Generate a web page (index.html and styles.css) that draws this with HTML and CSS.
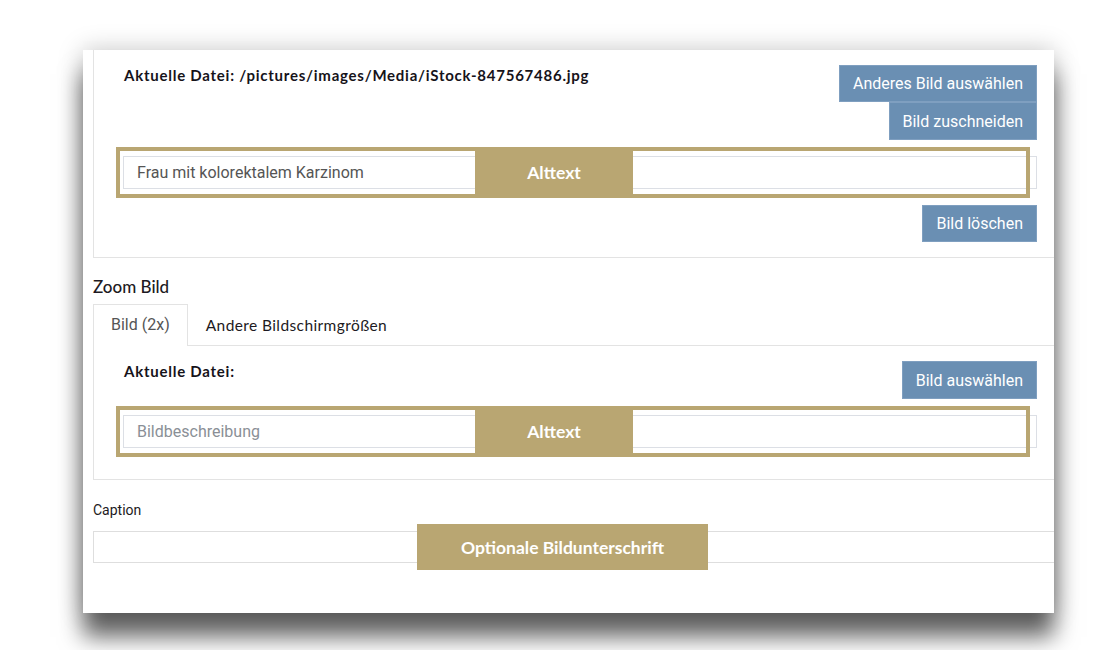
FILE: index.html
```html
<!DOCTYPE html>
<html lang="de">
<head>
    <meta charset="UTF-8">
    <meta name="viewport" content="width=device-width, initial-scale=1.0">
    <title>Bild bearbeiten</title>
    <link rel="stylesheet" href="styles.css">
</head>
<body>
    <div class="panel">
        <!-- Hauptbild -->
        <div class="card card-first">
            <div class="file-row">
                <div class="file-label">Aktuelle Datei: /pictures/images/Media/iStock-847567486.jpg</div>
                <div class="btn-stack">
                    <button class="btn">Anderes Bild auswählen</button>
                    <button class="btn">Bild zuschneiden</button>
                </div>
            </div>
            <div class="field">
                <input class="text-input" type="text" value="Frau mit kolorektalem Karzinom">
                <div class="hint-frame"></div>
                <div class="hint-tag alt-tag">Alttext</div>
            </div>
            <div class="actions">
                <button class="btn">Bild löschen</button>
            </div>
        </div>

        <!-- Zoom Bild -->
        <h3 class="section-title">Zoom Bild</h3>
        <div class="tabs">
            <span class="tab active">Bild (2x)</span>
            <span class="tab">Andere Bildschirmgrößen</span>
        </div>
        <div class="card tab-panel">
            <div class="file-row">
                <div class="file-label">Aktuelle Datei:</div>
                <div class="btn-stack">
                    <button class="btn">Bild auswählen</button>
                </div>
            </div>
            <div class="field">
                <input class="text-input" type="text" placeholder="Bildbeschreibung">
                <div class="hint-frame"></div>
                <div class="hint-tag alt-tag">Alttext</div>
            </div>
        </div>

        <!-- Caption -->
        <label class="caption-label">Caption</label>
        <div class="field caption-field">
            <input class="text-input caption-input" type="text">
            <div class="hint-tag caption-tag">Optionale Bildunterschrift</div>
        </div>
    </div>
</body>
</html>
```

FILE: styles.css
```css
html, body {
    min-height: 650px;
}
body {
    margin: 0;
    background: #fff;
    color: #1d1a22;
    font-family: Roboto, "Liberation Sans", sans-serif;
}
.panel {
    margin: 50px 0 0 83px;
    width: 971px;
    height: 563px;
    box-sizing: border-box;
    padding-left: 10px;
    background: #fff;
    overflow: hidden;
    box-shadow: 0 24px 22px 0 rgba(0, 0, 0, 0.6), 0 0 24px rgba(0, 0, 0, 0.22);
}
.card {
    border: 1px solid #e3e3e3;
    margin-right: -20px;
    padding: 15px 36px 15px 29px;
    background: #fff;
}
.card-first {
    border-top: none;
}
.file-row {
    display: flex;
    justify-content: space-between;
    align-items: flex-start;
}
.file-label {
    font-family: Lato, "Open Sans", sans-serif;
    font-weight: 700;
    font-size: 15px;
    line-height: 20px;
    margin-left: 1px;
    letter-spacing: 0.75px;
    color: #16131a;
}
.btn-stack {
    display: flex;
    flex-direction: column;
    align-items: flex-end;
}
.btn {
    background-color: #6a8fb3;
    color: #fff;
    border: 1px solid #7f9fc0;
    height: 37px;
    padding: 0 13px;
    font-family: Roboto, "Liberation Sans", sans-serif;
    font-size: 16px;
    cursor: pointer;
}
.btn-stack .btn + .btn {
    height: 38px;
}
.field {
    position: relative;
    margin-top: 16px;
}
.text-input {
    display: block;
    box-sizing: border-box;
    width: 100%;
    height: 33px;
    border: 1px solid #dcdfe5;
    padding: 0 13px;
    font-family: Roboto, "Liberation Sans", sans-serif;
    font-size: 16px;
    color: #555;
    background: #fff;
}
.text-input::placeholder {
    color: #8a8f96;
}
.hint-frame {
    position: absolute;
    left: -7px;
    top: -9px;
    width: 914px;
    height: 51px;
    box-sizing: border-box;
    border: 4px solid #b9a672;
}
.hint-tag {
    position: absolute;
    display: flex;
    align-items: center;
    justify-content: center;
    background: #b9a672;
    color: #fff;
    font-family: Lato, "Open Sans", sans-serif;
    font-weight: 700;
}
.alt-tag {
    left: 352px;
    top: -8px;
    width: 158px;
    height: 49px;
    font-size: 17.5px;
}
.actions {
    display: flex;
    justify-content: flex-end;
    margin-top: 16px;
}
.section-title {
    margin: 19px 0 0;
    font-family: Lato, "Open Sans", sans-serif;
    font-weight: 500;
    font-size: 17px;
    line-height: 20px;
}
.tabs {
    display: flex;
    margin-top: 7px;
}
.tab {
    padding: 10px 17px;
    line-height: 20px;
    font-family: Lato, "Open Sans", sans-serif;
    font-size: 15.5px;
    letter-spacing: 0.4px;
    border: 1px solid transparent;
    border-bottom: none;
}
.tab.active {
    font-family: Roboto, "Liberation Sans", sans-serif;
    font-size: 16px;
    color: #555;
    letter-spacing: 0;
    border-color: #e3e3e3;
    background: #fff;
    margin-bottom: -1px;
    position: relative;
    z-index: 1;
}
.tab-panel {
    padding-top: 15px;
    padding-bottom: 31px;
}
.tab-panel .btn {
    height: 38px;
}
.caption-label {
    display: block;
    margin-top: 20px;
    font-size: 14px;
    line-height: 20px;
}
.caption-field {
    margin-top: 11px;
    margin-right: -20px;
}
.caption-input {
    height: 32px;
    border-color: #dedede;
}
.caption-tag {
    left: 324px;
    top: -7px;
    width: 291px;
    height: 46px;
    font-size: 17.5px;
}
```
